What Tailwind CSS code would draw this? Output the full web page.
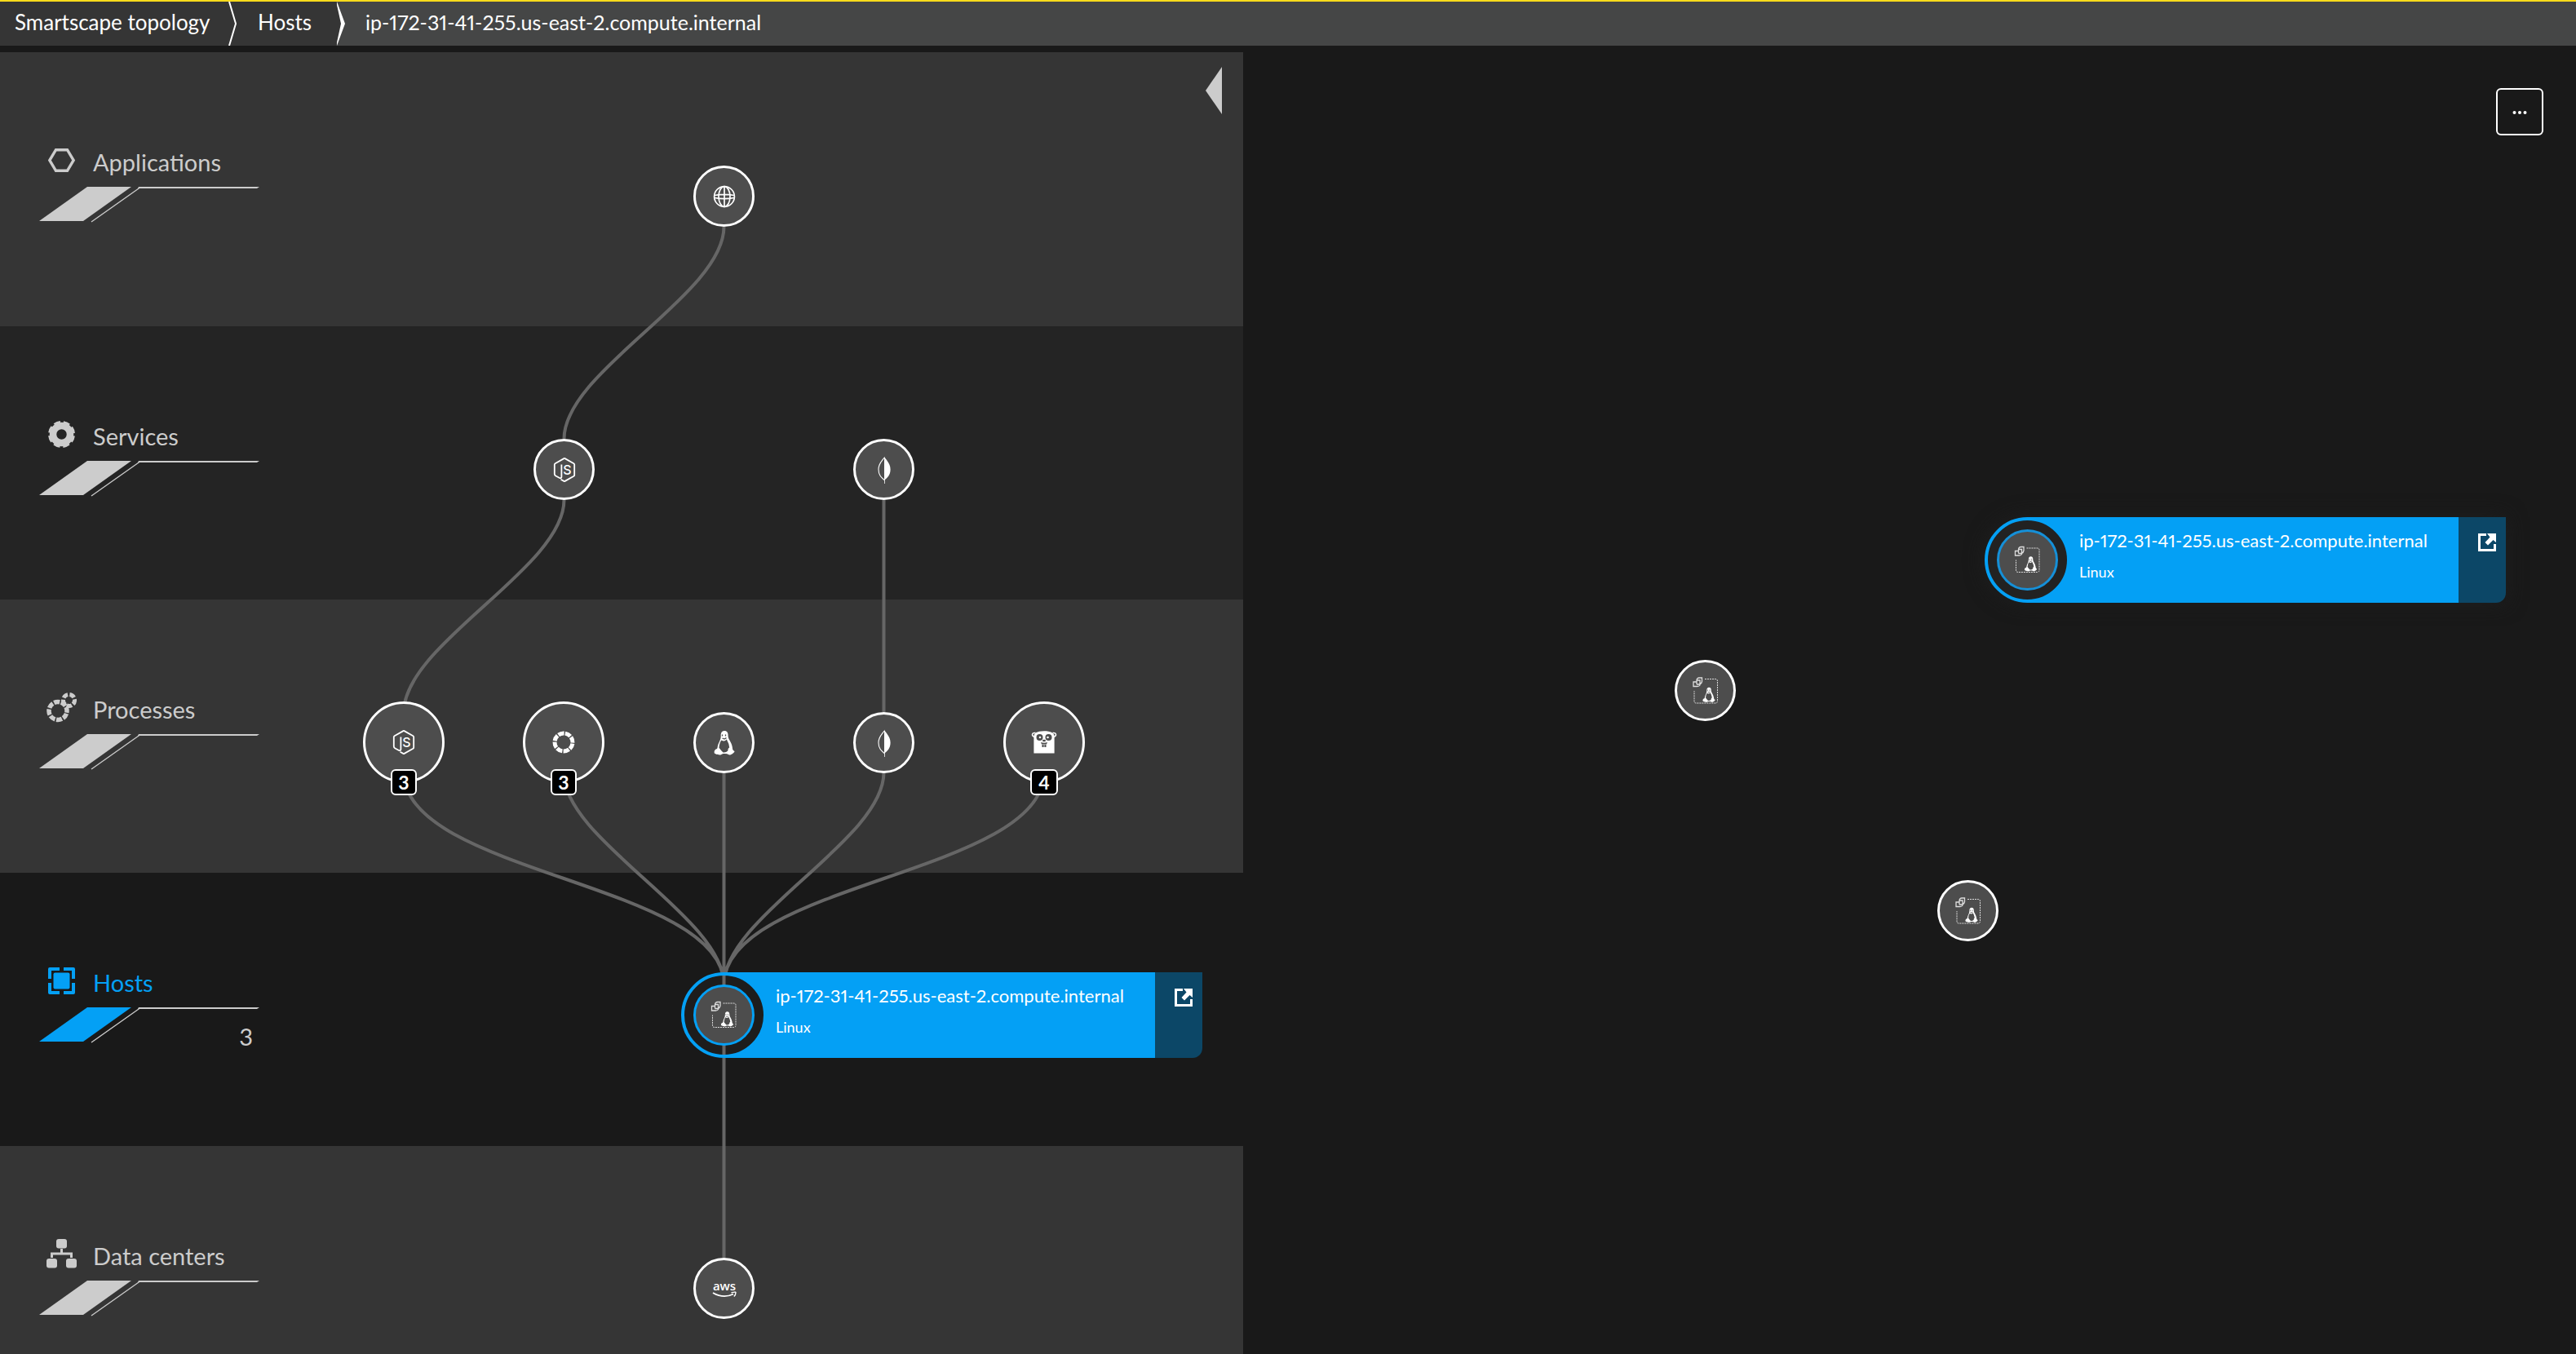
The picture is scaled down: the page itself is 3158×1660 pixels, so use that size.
<!DOCTYPE html>
<html lang="en">
<head>
<meta charset="utf-8">
<title>Smartscape topology</title>
<script src="https://cdn.jsdelivr.net/npm/@tailwindcss/browser@4"></script>
</head>
<body class="flex min-h-screen flex-col overflow-x-hidden bg-[#191919] font-['Lato',sans-serif] text-white">

<svg class="hidden" aria-hidden="true">
  <symbol id="slash" viewBox="0 0 270 44">
    <path d="M59 0H113L54 42H0Z" fill="currentColor"/>
    <path d="M64 43L123.500 1" stroke="#ccc" stroke-width="1.300" fill="none"/>
    <path d="M122 0H270L267 2H121Z" fill="#ccc"/>
  </symbol>
  <symbol id="globe" viewBox="-18 -18 36 36">
    <g fill="none" stroke="#fff" stroke-width="1.700">
      <circle r="12.400"/><ellipse rx="7" ry="12.400"/><path d="M0-12V12M-12-1.500Q0-3.800 12-1.500M-12 1.500Q0 3.800 12 1.500"/>
    </g>
  </symbol>
  <symbol id="nodejs" viewBox="-18 -18 36 36">
    <path d="M-3.600-6.500V8.500Q-3.600 10.800-6 10L-11 7.200Q-12.200 6.500-12.200 5V-6.500Q-12.200-7.300-11.400-7.800L-.6-13.900Q0-14.200.6-13.900L11.400-7.800Q12.200-7.300 12.200-6.500V6.500Q12.200 7.300 11.400 7.800L.6 13.900Q0 14.200-.6 13.900L-4.500 11.800" fill="none" stroke="#fff" stroke-width="1.800"/>
    <text x="-1.800" y="5.500" fill="#fff" font-family="Inter, sans-serif" font-weight="500" font-size="16">S</text>
  </symbol>
  <symbol id="leaf" viewBox="-18 -18 36 36">
    <path d="M0-16.500C1-13 7.600-9 7.600-.5C7.600 6.500 3.500 10 .9 12L.7 17H0Z" fill="#fff"/>
    <path d="M0-15C-2-11.500-7-8-7-.5C-7 6.500-3.500 9.500 0 12.500" fill="none" stroke="#fff" stroke-width="1.100"/>
  </symbol>
  <symbol id="tux" viewBox="-18 -18 36 36">
    <path d="M-4.300-9C-4.500-13-2.500-15 0-15C3.500-15 4.800-12.500 4.600-8.500C4.500-5 9-1 9.800 5C10.200 8 10 8.500 12.500 10C12.800 11.500 8 15 6 14.500C4.500 14 4 13-.5 13C-3.500 13-3 14.800-6 14.500C-8 14-12 13.500-12.300 12C-12.400 10.500-12.500 9-10.500 7.500C-9 7-8.500 7-8.300 4.500C-7.500-.5-4-3.500-4.300-9Z" fill="#fff"/>
    <path d="M-3.500-3.500Q0-1 2.800-4.500Q6 1 6.200 5.500Q4.500 6 4.300 9.500Q2 12-1.500 11.500Q-3.500 10-6.500 5.800Q-6-1-3.500-3.500Z" fill="#4d4d4d"/>
    <path d="M-2.500-10.500V-8.500M1.500-10.500V-8.500M-2.500-6L0-5L2.500-6.300" stroke="#4d4d4d" stroke-width="1.300" fill="none"/>
  </symbol>
  <symbol id="ring" viewBox="-18 -18 36 36">
    <circle r="11" fill="none" stroke="#fff" stroke-width="5" stroke-dasharray="7.300 1.340" transform="rotate(8)"/>
  </symbol>
  <symbol id="gopher" viewBox="-18 -18 36 36">
    <path d="M-12.600 13.500V-7C-12.600-11.500-8-13.800 0-13.800S12.600-11.500 12.600-7V13.500Z" fill="#fff"/>
    <path d="M-10.500-11.500Q-14.500-12-14.500-9Q-14-7-12-6.500M10.500-11.500Q14.500-12 14.500-9Q14-7 12-6.500" fill="none" stroke="#fff" stroke-width="1.600"/>
    <g fill="#4d4d4d"><circle cx="-5.500" cy="-6" r="4"/><circle cx="5.500" cy="-6" r="4"/><ellipse cy="-2" rx="2" ry="1.300"/><path d="M-4 0Q0 1.500 4 0L3 2.500H-3ZM-2.500 3H-.4V6H-2.500ZM.4 3H2.500V6H.4Z"/></g>
    <circle cx="-5" cy="-6" r="1.300" fill="#fff"/><circle cx="4.500" cy="-6" r="1.300" fill="#fff"/>
  </symbol>
  <symbol id="aws" viewBox="-18 -18 36 36">
    <text x="0" y="2" fill="#fff" text-anchor="middle" font-family="Open Sans, sans-serif" font-weight="600" font-size="15">aws</text>
    <path d="M-14 5Q-1 12.500 11 6.500" fill="none" stroke="#fff" stroke-width="1.800"/><path d="M8.500 4.800Q14 3.500 14 4.500Q14 7.500 11.800 9.500" fill="none" stroke="#fff" stroke-width="1.400"/>
  </symbol>
  <symbol id="host" viewBox="-18 -18 36 36">
    <g fill="none" stroke="#ddd" stroke-width="1">
      <path d="M-1-14.500H12Q14.500-14.500 14.500-12V12.500Q14.500 15 12 15H-11.500Q-14 15-14 12.500V0" stroke-dasharray="2 1"/>
      <path d="M-11-13H-7V-7Q-8-5.500-10-5.500H-15V-11H-11M-11-8V-13Q-10.500-16-8-16H-4.500V-11.500Q-5-9-7-8H-11" stroke-width="1.300"/>
    </g>
    <use href="#tux" x="-7" y="-6" width="22" height="22"/>
  </symbol>
  <symbol id="open" viewBox="0 0 22 22">
    <path d="M10 1.500H1.500V20.500H20.500V13" fill="none" stroke="#fff" stroke-width="3"/>
    <path d="M11 0H22V11L18.500 8L12 14.500L8.500 11L14.500 4.500Z" fill="#fff"/>
  </symbol>
  <symbol id="halo" viewBox="0 0 105 105">
    <circle cx="52.500" cy="52.500" r="51" fill="#1d1d1d"/>
    <path d="M52.500 2V102" stroke="#666" stroke-width="4"/>
    <circle cx="52.500" cy="52.500" r="50.500" fill="none" stroke="#04a0f5" stroke-width="4"/>
    <circle cx="52.500" cy="52.500" r="36" fill="#4d4d4d" stroke="#04a0f5" stroke-width="3"/>
    <use href="#host" x="34.500" y="34.500" width="36" height="36"/>
  </symbol>
  <symbol id="halo-plain" viewBox="0 0 105 105">
    <circle cx="52.500" cy="52.500" r="50.500" fill="#222" stroke="#04a0f5" stroke-width="4"/>
    <circle cx="52.500" cy="52.500" r="36" fill="#4d4d4d" stroke="#1590d8" stroke-width="3"/>
    <use href="#host" x="34.500" y="34.500" width="36" height="36"/>
  </symbol>
</svg>

<header class="border-t-2 border-[#fddb1b] bg-[#454646]">
  <nav aria-label="Breadcrumb">
    <ol class="flex h-[54px] text-[26px] leading-[50px]">
      <li class="flex bg-[#353535] pl-[18px]"><a href="#" class="w-[262px]">Smartscape topology</a>
        <svg class="h-[54px] w-3" viewBox="0 0 12 54"><path d="M1 0L9 27L1 54" fill="none" stroke="#fff" stroke-width="2"/></svg></li>
      <li class="flex bg-[#353535] pl-6"><a href="#" class="w-24">Hosts</a></li>
      <li class="flex"><svg class="h-[54px] w-3" viewBox="0 0 12 54"><path d="M0 0L7 27L0 54Z" fill="#353535"/><path d="M1 0L11 27L1 54V50L6 27L1 4Z" fill="#fff"/></svg>
        <a href="#" aria-current="page" class="pl-6 text-[25px] proportional-nums">ip-172-31-41-255.us-east-2.compute.internal</a></li>
    </ol>
  </nav>
</header>

<main class="flex flex-1">
  <section aria-label="Topology layers" class="relative mt-2 flex w-[1524px] shrink-0 flex-col text-[29px] leading-8 text-[#ccc]">
    <div class="h-[336px] bg-[#353535] pl-12 pt-[114px]">
      <a href="#" class="mb-[14px] flex h-[37px] items-center gap-[22px] pl-[11px]">
        <svg class="h-[33px] w-[33px]" viewBox="0 -2 33 33"><path d="M9.500 1.700H23.500L31.200 14.500L23.500 27.300H9.500L1.800 14.500Z" fill="none" stroke="#ccc" stroke-width="3.400"/></svg>
        <span class="pt-1">Applications</span></a>
      <svg class="h-11 w-[270px]"><use href="#slash"/></svg>
    </div>
    <div class="h-[335px] bg-[#242424] pl-12 pt-[114px]">
      <a href="#" class="mb-[14px] flex h-[37px] items-center gap-[22px] pl-[11px]">
        <svg class="h-[33px] w-[33px]" viewBox="-16.500 -16.500 33 33"><circle r="10.500" fill="none" stroke="#ccc" stroke-width="8.500"/><circle r="14" fill="none" stroke="#ccc" stroke-width="5" stroke-dasharray="7.400 3.596" transform="rotate(7)"/></svg>
        <span class="pt-1">Services</span></a>
      <svg class="h-11 w-[270px]"><use href="#slash"/></svg>
    </div>
    <div class="h-[335px] bg-[#353535] pl-12 pt-[114px]">
      <a href="#" class="mb-[14px] flex h-[37px] items-center gap-5 pl-[9px]">
        <svg class="h-[37px] w-[37px]" viewBox="0 0 37 37"><circle cx="14" cy="22.500" r="11" fill="none" stroke="#ccc" stroke-width="5.500" stroke-dasharray="7 1.640" transform="rotate(18 14 22.500)"/><circle cx="27.500" cy="9.500" r="7" fill="none" stroke="#ccc" stroke-width="5" stroke-dasharray="6.500 2.300" transform="rotate(60 27.500 9.500)"/></svg>
        <span class="pt-1">Processes</span></a>
      <svg class="h-11 w-[270px]"><use href="#slash"/></svg>
    </div>
    <div class="h-[335px] bg-[#191919] pl-12 pt-[114px] text-[#04a0f5]">
      <a href="#" class="mb-[14px] flex h-[37px] items-center gap-[22px] pl-[11px]">
        <svg class="h-[33px] w-[33px]" viewBox="0 0 33 33" fill="currentColor"><rect x="6.500" y="6.500" width="20" height="20" rx="2"/><path d="M2 0H14V4H4V14H0V2Q0 0 2 0ZM19 0H31Q33 0 33 2V14H29V4H19ZM0 19H4V29H14V33H2Q0 33 0 31ZM29 19H33V31Q33 33 31 33H19V29H29Z"/></svg>
        <span class="pt-1">Hosts</span></a>
      <svg class="h-11 w-[270px]"><use href="#slash"/></svg>
      <p class="-mt-6 w-[262px] text-right text-[#ccc]">3</p>
    </div>
    <div class="min-h-[255px] flex-1 bg-[#353535] pl-12 pt-[114px]">
      <a href="#" class="mb-[14px] flex h-[37px] items-center gap-5 pl-[9px]">
        <svg class="h-[37px] w-[37px]" viewBox="0 0 37 37" fill="#ccc"><rect x="12" width="13" height="11.500" rx="3"/><rect y="24" width="13" height="11.500" rx="3"/><rect x="24" y="24" width="13" height="11.500" rx="3"/><path d="M17 12H20V16.500H32V23H29V19.500H8V23H5V16.500H17Z"/></svg>
        <span class="pt-1">Data centers</span></a>
      <svg class="h-11 w-[270px]"><use href="#slash"/></svg>
    </div>

    <svg class="pointer-events-none absolute left-0 top-0 h-[1596px] w-[1524px]" viewBox="0 0 1524 1596" fill="none" stroke="#666" stroke-width="4">
      <path d="M887.500 214C887.500 297 691.500 391 691.500 474M691.500 549C691.500 632 495 726 495 809M1083.500 549V809"/>
      <path d="M495 883C495 1007 887.500 1019 887.500 1143M691 883C691 966 887.500 1060 887.500 1143M887.500 884V1143M1083.500 883C1083.500 966 887.500 1060 887.500 1143M1280 883C1280 1007 887.500 1019 887.500 1143M887.500 1233V1478"/>
    </svg>

    <button aria-label="Collapse panel" class="absolute right-[26px] top-[18px]"><svg class="h-[58px] w-5" viewBox="0 0 20 58"><path d="M20 0V58L0 29Z" fill="#ccc"/></svg></button>

    <button aria-label="Web application" class="absolute left-[850px] top-[139px] grid size-[75px] place-items-center rounded-full border-3 border-white bg-[#4d4d4d]"><svg class="size-9"><use href="#globe"/></svg></button>
    <button aria-label="Node.js service" class="absolute left-[654px] top-[474px] grid size-[75px] place-items-center rounded-full border-3 border-white bg-[#4d4d4d]"><svg class="size-9"><use href="#nodejs"/></svg></button>
    <button aria-label="MongoDB service" class="absolute left-[1046px] top-[474px] grid size-[75px] place-items-center rounded-full border-3 border-white bg-[#4d4d4d]"><svg class="size-9"><use href="#leaf"/></svg></button>

    <button aria-label="Node.js processes" class="absolute left-[445px] top-[796px] grid size-[100px] place-items-center rounded-full border-3 border-white bg-[#4d4d4d]"><svg class="size-9"><use href="#nodejs"/></svg>
      <span class="absolute left-[31px] top-20 h-8 w-8 rounded-md border-2 border-white bg-black text-center text-[23px] font-bold leading-7 text-white">3</span></button>
    <button aria-label="Process groups" class="absolute left-[641px] top-[796px] grid size-[100px] place-items-center rounded-full border-3 border-white bg-[#4d4d4d]"><svg class="size-9"><use href="#ring"/></svg>
      <span class="absolute left-[31px] top-20 h-8 w-8 rounded-md border-2 border-white bg-black text-center text-[23px] font-bold leading-7 text-white">3</span></button>
    <button aria-label="Linux process" class="absolute left-[850px] top-[809px] grid size-[75px] place-items-center rounded-full border-3 border-white bg-[#4d4d4d]"><svg class="size-9"><use href="#tux"/></svg></button>
    <button aria-label="MongoDB process" class="absolute left-[1046px] top-[809px] grid size-[75px] place-items-center rounded-full border-3 border-white bg-[#4d4d4d]"><svg class="size-9"><use href="#leaf"/></svg></button>
    <button aria-label="Go processes" class="absolute left-[1230px] top-[796px] grid size-[100px] place-items-center rounded-full border-3 border-white bg-[#4d4d4d]"><svg class="size-9"><use href="#gopher"/></svg>
      <span class="absolute left-[30px] top-20 h-8 w-[34px] rounded-md border-2 border-white bg-black text-center text-[23px] font-bold leading-7 text-white">4</span></button>

    <article class="absolute left-[835px] top-[1128px] flex h-[105px] w-[639px] text-white">
      <div class="ml-[52px] flex-1 whitespace-nowrap bg-[#04a0f5] pl-16 pt-[15px]">
        <h2 class="text-[22px] leading-7 proportional-nums">ip-172-31-41-255.us-east-2.compute.internal</h2>
        <p class="pt-3 text-[18px] leading-6">Linux</p>
      </div>
      <a href="#" aria-label="Open host" class="w-[58px] rounded-br-xl bg-[#0c4767] pl-6 pt-5"><svg class="size-[22px]"><use href="#open"/></svg></a>
      <svg class="absolute left-0 top-0 size-[105px]"><use href="#halo"/></svg>
    </article>

    <button aria-label="AWS data center" class="absolute left-[850px] top-[1478px] grid size-[75px] place-items-center rounded-full border-3 border-white bg-[#4d4d4d]"><svg class="size-9"><use href="#aws"/></svg></button>
  </section>

  <section aria-label="Hosts map" class="relative flex-1">
    <button aria-label="More actions" class="absolute right-10 top-[52px] grid size-[58px] place-items-center rounded-md border-2 border-white"><svg class="h-4 w-5" viewBox="0 0 20 16" fill="#fff"><circle cx="3.500" cy="9" r="2"/><circle cx="10" cy="9" r="2"/><circle cx="16.500" cy="9" r="2"/></svg></button>

    <article class="absolute left-[909px] top-[578px] flex h-[105px] w-[639px] rounded-l-full rounded-br-xl shadow-[0_0_24px_#1f1f1f]">
      <div class="ml-[52px] flex-1 whitespace-nowrap bg-[#04a0f5] pl-16 pt-[15px]">
        <h2 class="text-[22px] leading-7 proportional-nums">ip-172-31-41-255.us-east-2.compute.internal</h2>
        <p class="pt-3 text-[18px] leading-6">Linux</p>
      </div>
      <a href="#" aria-label="Open host" class="w-[58px] rounded-br-xl bg-[#0c4767] pl-6 pt-5"><svg class="size-[22px]"><use href="#open"/></svg></a>
      <svg class="absolute left-0 top-0 size-[105px]"><use href="#halo-plain"/></svg>
    </article>

    <button aria-label="Linux host" class="absolute left-[529px] top-[753px] grid size-[75px] place-items-center rounded-full border-3 border-white bg-[#4d4d4d]"><svg class="size-9"><use href="#host"/></svg></button>
    <button aria-label="Linux host" class="absolute left-[851px] top-[1023px] grid size-[75px] place-items-center rounded-full border-3 border-white bg-[#4d4d4d]"><svg class="size-9"><use href="#host"/></svg></button>
  </section>
</main>
</body>
</html>
